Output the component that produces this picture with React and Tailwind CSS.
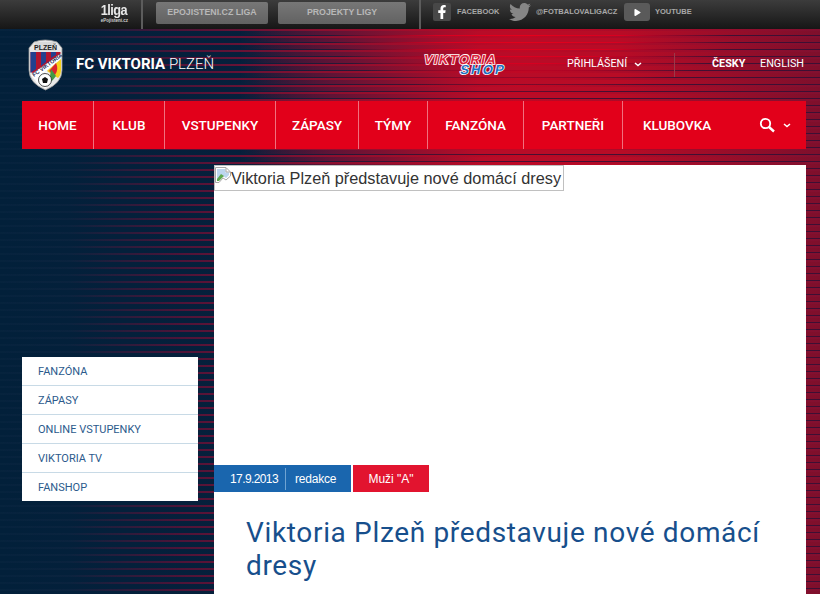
import React from "react";
import { FaTwitter, FaFacebookF, FaPlay } from "react-icons/fa";

const din = "font-['Roboto','Liberation_Sans',sans-serif]";

function Shield() {
  return (
    <svg width="37" height="52" viewBox="0 0 37 52" className="shrink-0">
      <path d="M2 9 L7 3 Q18 -1 30 3 L35 9 L35 31 Q35 44 18.5 51 Q2 44 2 31 Z" fill="#e8e8e8" stroke="#9a9a9a" strokeWidth="0.8" />
      <rect x="8" y="3" width="21" height="9" fill="#d9d9d9" />
      <text x="18.5" y="10.5" textAnchor="middle" fontSize="7" fontWeight="700" fill="#222" fontFamily="Liberation Sans, sans-serif">PLZEŇ</text>
      <path d="M3.5 13 H33.5 V15 L6 34 L3.5 33 Z" fill="#b3142e" />
      <path d="M3.5 13 H9 V30 L3.5 34 Z" fill="#23408f" />
      <path d="M14 13 H19 V23 L14 27 Z" fill="#23408f" />
      <path d="M24 13 H29 V16 L24 19 Z" fill="#23408f" />
      <path d="M4 36 L33 15 L34 20 L8 41 Z" fill="#fff" />
      <text x="0" y="0" transform="translate(7 38) rotate(-36)" fontSize="5.6" fontWeight="700" fill="#1c2a55" fontFamily="Liberation Sans, sans-serif">FC VIKTORIA</text>
      <path d="M34 20 V31 Q34 36 31 39 L20 32 Z" fill="#f4d11c" />
      <path d="M29 24 Q32 30 28 36 L22 32 Z" fill="#d9242f" />
      <path d="M24 30 L29 37 Q26 42 22 44 Z" fill="#3f9a46" />
      <path d="M8 41 L20 32 L23 44 Q20 48 18.5 49 Q10 46 8 41 Z" fill="#fff" />
      <circle cx="18" cy="41" r="6.5" fill="#fff" stroke="#222" strokeWidth="0.8" />
      <path d="M18 38 L21 40 L20 44 L16 44 L15 40 Z" fill="#111" />
    </svg>
  );
}

function Chevron({ className }) {
  return (
    <svg width="8" height="5" viewBox="0 0 8 5" className={className}>
      <path d="M1 1 L4 3.5 L7 1" fill="none" stroke="currentColor" strokeWidth="1.5" />
    </svg>
  );
}

function BrokenImage() {
  return (
    <svg width="16" height="16" viewBox="0 0 16 16" className="shrink-0 self-start mt-px">
      <path d="M0.5 0.5 H11 L15.5 5 V9 L11 13 L8 11 L4 15.5 H0.5 Z" fill="#fff" stroke="#a8a8a8" />
      <path d="M2 2 H10.5 V5.5 H14 V8 L11 11 L8 9 L3.5 14 H2 Z" fill="#bcd6ee" />
      <path d="M2 12 L6 7 L9 9 L4 14 H2 Z" fill="#5da84e" />
      <path d="M11 1 V5 H15" fill="none" stroke="#a8a8a8" />
    </svg>
  );
}

const navItems = [
  ["HOME", "w-[72px]"],
  ["KLUB", "w-[71px]"],
  ["VSTUPENKY", "w-[111px]"],
  ["ZÁPASY", "w-[83px]"],
  ["TÝMY", "w-[69px]"],
  ["FANZÓNA", "w-[96px]"],
  ["PARTNEŘI", "w-[99px]"],
];

const sideItems = ["FANZÓNA", "ZÁPASY", "ONLINE VSTUPENKY", "VIKTORIA TV", "FANSHOP"];

export default function App() {
  return (
    <div
      className={`relative h-[594px] w-[820px] overflow-hidden ${din}
        bg-[radial-gradient(ellipse_200px_60px_at_530px_36px,#e6001a_0%,#d80020_45%,transparent_100%),linear-gradient(to_right,#02203a_0px,#06203c_250px,#4a1030_450px,#3c1034_820px)]
        before:content-[''] before:absolute before:inset-0
        before:bg-[linear-gradient(to_right,transparent_240px,#5e1436_330px,#b80c28_480px,#b80c26_620px,#7e0f2c_820px)]
        before:[mask-image:repeating-linear-gradient(to_bottom,transparent_0px,transparent_3px,#000_3px,#000_7px)]
        after:content-[''] after:absolute after:inset-0
        after:bg-[linear-gradient(to_right,rgba(40,60,90,0.12)_0px,rgba(40,50,80,0.2)_70px,#4e1438_180px,#8a1030_320px,#c00824_520px,#821030_820px)]
        after:[mask-image:repeating-linear-gradient(to_bottom,transparent_0px,transparent_1px,#000_1px,#000_3px,transparent_3px,transparent_7px)]`}
    >
      <div className="relative z-10 flex flex-col">
        {/* top bar */}
        <div className="flex h-[29px] items-stretch bg-[linear-gradient(to_bottom,#3c3c3c,#161616)]">
          <div className="flex w-[143px] flex-col items-end border-r-2 border-[#5c5c5c] pr-[13px] pt-[3px] font-['Liberation_Sans',sans-serif] text-white">
            <span className="mr-px origin-right scale-x-[0.85] text-[15px] font-bold leading-[14px] tracking-[-0.6px] text-[#e8e8e8]">1liga</span>
            <span className="mt-px text-[4.5px] font-bold leading-[6px] text-[#cfcfcf]">ePojisteni.cz</span>
          </div>
          <div className="ml-[13px] flex items-center gap-[10px] pb-[4px] font-['Liberation_Sans',sans-serif] text-[8.8px] font-bold text-[#b8b8b8]">
            <span className="flex h-[22px] w-[112px] items-center justify-center rounded-[2px] bg-[linear-gradient(to_bottom,#777,#626262)]">EPOJISTENI.CZ LIGA</span>
            <span className="flex h-[22px] w-[128px] items-center justify-center rounded-[2px] bg-[linear-gradient(to_bottom,#777,#626262)]">PROJEKTY LIGY</span>
          </div>
          <div className="ml-[13px] w-[2px] bg-[#5c5c5c]" />
          <div className="flex items-center pb-[5px] pl-[12px] font-['Liberation_Sans',sans-serif] text-[7.5px] font-bold text-[#a8a8a8]">
            <span className="flex h-[18px] w-[18px] items-center justify-center rounded-[2px] bg-[#484848] text-white"><FaFacebookF size={14} /></span>
            <span className="ml-[6px] w-[46px]">FACEBOOK</span>
            <FaTwitter size={22} className="ml-[6px] text-[#868686]" />
            <span className="ml-[5px] w-[83px]">@FOTBALOVALIGACZ</span>
            <span className="ml-[5px] flex h-[18px] w-[26px] items-center justify-center rounded-[3px] bg-[#5a5a5a] text-white"><FaPlay size={7} /></span>
            <span className="ml-[5px]">YOUTUBE</span>
          </div>
        </div>

        {/* header */}
        <div className="flex h-[72px] items-center pb-px pl-[27px]">
          <Shield />
          <div className="ml-[12px] w-[139px] whitespace-nowrap text-[15px] leading-none text-white">
            <span className="font-bold">FC VIKTORIA</span> <span className="font-light">PLZEŇ</span>
          </div>
          <div className="ml-[208px] flex w-[84px] -skew-x-12 flex-col items-end font-['Liberation_Sans',sans-serif] font-bold leading-[10px]">
            <span className="w-full text-[13px] tracking-[1.4px] text-[#d9233a] [-webkit-text-stroke:1.6px_#fff] [paint-order:stroke_fill]">VIKTORIA</span>
            <span className="text-[13px] tracking-[2.2px] text-[#1d6fc0] [-webkit-text-stroke:1.6px_#fff] [paint-order:stroke_fill]">SHOP</span>
          </div>
          <span className="ml-[60px] w-[60px] whitespace-nowrap text-[10.8px] text-white">PŘIHLÁŠENÍ</span>
          <Chevron className="ml-[7px] text-white" />
          <div className="ml-[32px] h-[24px] w-px bg-[#9a3a4a]" />
          <span className="ml-[37px] w-[32px] text-[10.8px] font-bold text-white">ČESKY</span>
          <span className="ml-[16px] text-[10.8px] text-white">ENGLISH</span>
        </div>

        {/* nav */}
        <nav className="mx-[22px] flex h-[48px] w-[784px] items-stretch bg-[#e2001a] text-[13.5px] font-medium text-white">
          {navItems.map(([label, w]) => (
            <span key={label} className={`flex ${w} items-center justify-center border-r border-[#f0707e]`}>{label}</span>
          ))}
          <span className="flex w-[108px] items-center justify-center">KLUBOVKA</span>
          <span className="ml-[28px] flex items-center gap-[8px]">
            <svg width="16" height="16" viewBox="0 0 16 16">
              <circle cx="6.5" cy="6.5" r="4.7" fill="none" stroke="#fff" strokeWidth="1.8" />
              <path d="M10 10 L15 14.5" stroke="#fff" strokeWidth="2.4" />
            </svg>
            <Chevron />
          </span>
        </nav>

        {/* body */}
        <div className="mt-[16px] flex items-start pl-[22px]">
          <ul className="mt-[192px] w-[176px] bg-white text-[11px] text-[#2c5a8c]">
            {sideItems.map((item, i) => (
              <li key={item} className={`flex items-center pl-[16px] pt-[2px] ${i < 4 ? "h-[29px] border-b border-[#c8dae6]" : "h-[28px]"}`}>{item}</li>
            ))}
          </ul>
          <main className="ml-[16px] h-[500px] w-[592px] bg-white">
            <div className="h-[300px]">
              <div className="inline-flex h-[26px] w-[350px] border border-[#c0c0c0] font-['Liberation_Sans',sans-serif] text-[16.3px] leading-[24px] text-[#333] whitespace-nowrap">
                <BrokenImage />
                <span>Viktoria Plzeň představuje nové domácí dresy</span>
              </div>
            </div>
            <div className="flex h-[27px] gap-[2px] font-['Liberation_Sans',sans-serif] text-[12px] text-white">
              <div className="flex w-[137px] items-center bg-[#1a66ae]">
                <span className="flex h-[22px] w-[72px] items-center justify-end border-r border-[#6fa3d2] pr-[7px] tracking-[-0.6px]">17.9.2013</span>
                <span className="pl-[9px] tracking-[-0.2px]">redakce</span>
              </div>
              <div className="flex w-[76px] items-center justify-center bg-[#e2142f]">Muži "A"</div>
            </div>
            <h1 className="mt-[24px] w-[560px] pl-[32px] text-[28px] font-normal leading-[33px] tracking-[0.66px] text-[#174f8c]">
              Viktoria Plzeň představuje nové domácí dresy
            </h1>
          </main>
        </div>
      </div>
    </div>
  );
}
